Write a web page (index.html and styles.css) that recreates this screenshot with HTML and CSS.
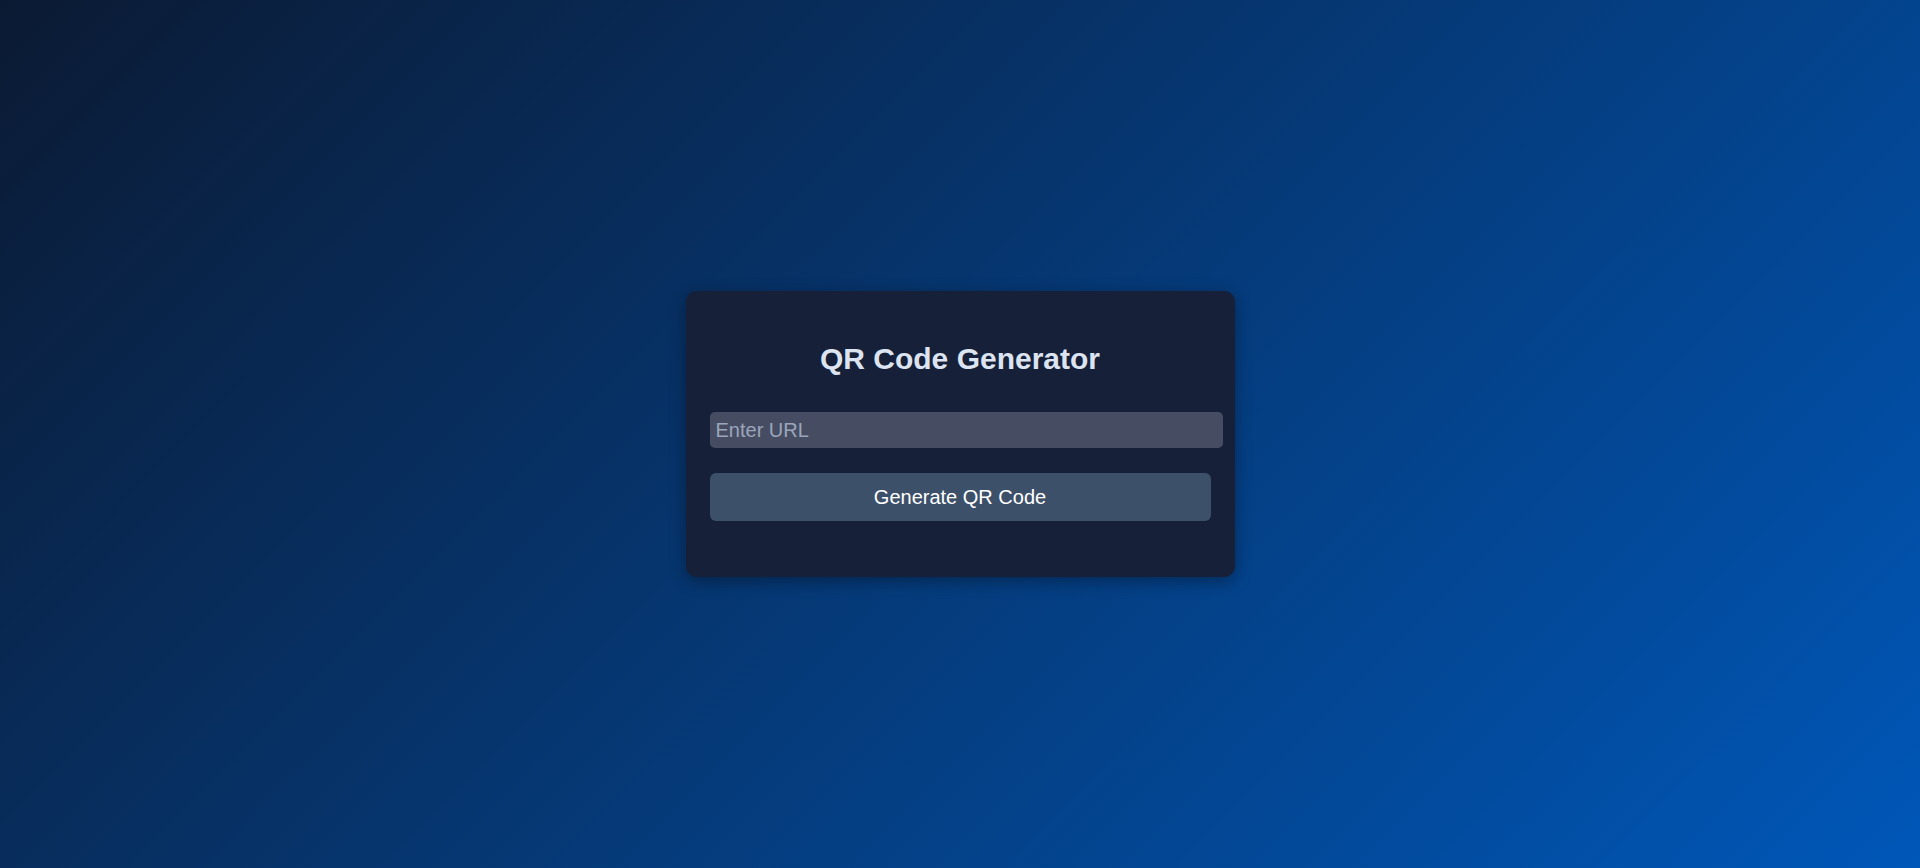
FILE: index.html
```html
<!DOCTYPE html>
<html lang="en">
<head>
<meta charset="utf-8">
<title>QR Code Generator</title>
<link rel="stylesheet" href="styles.css">
</head>
<body>
  <main class="card">
    <h2 class="title">QR Code Generator</h2>
    <input class="url-input" type="text" placeholder="Enter URL">
    <button class="gen-btn" type="button">Generate QR Code</button>
  </main>
</body>
</html>
```

FILE: styles.css
```css
html, body {
  margin: 0;
  padding: 0;
  height: 100%;
}

body {
  font-family: "Liberation Sans", Arial, sans-serif;
  background: linear-gradient(135deg, #0b1a33 0%, #0057b8 100%);
  display: flex;
  align-items: center;
  justify-content: center;
  min-height: 100vh;
}

.card {
  width: 501px;
  padding: 50px 24px 56px;
  background: #172039;
  border-radius: 11px;
  box-shadow: 0 4px 16px rgba(0, 0, 0, 0.35);
  display: flex;
  flex-direction: column;
  align-items: flex-start;
}

.title {
  align-self: stretch;
  margin: 0 0 36px;
  font-size: 30px;
  line-height: 35px;
  font-weight: bold;
  text-align: center;
  color: #dde4f1;
}

.url-input {
  width: 100%;
  margin: 0 0 25px;
  padding: 6px;
  font-family: inherit;
  font-size: 20px;
  line-height: 24px;
  height: 24px;
  border: none;
  border-radius: 5px;
  background: #464d62;
  color: #e0e6f1;
  outline: none;
}

.url-input::placeholder {
  color: #9ba5bb;
}

.gen-btn {
  width: 100%;
  height: 48px;
  padding: 0;
  border: none;
  border-radius: 6px;
  background: #3d5069;
  color: #ffffff;
  font-family: inherit;
  font-size: 20px;
  cursor: pointer;
}
```
